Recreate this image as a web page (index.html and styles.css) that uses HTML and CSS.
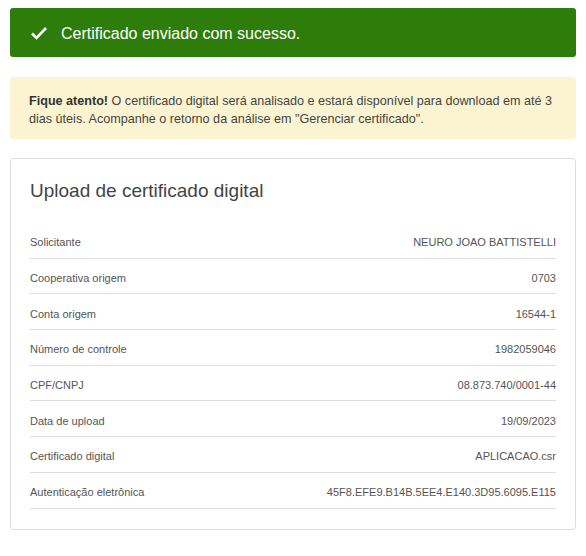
FILE: index.html
```html
<!DOCTYPE html>
<html lang="pt-BR">
<head>
    <meta charset="UTF-8">
    <meta name="viewport" content="width=device-width, initial-scale=1.0">
    <title>Upload de certificado digital</title>
    <link rel="stylesheet" href="styles.css">
</head>

<body>
    <div class="success">
        <svg class="check" width="18" height="14" viewBox="0 0 18 14">
            <path d="M2 7.5 L6.5 12 L16 2" fill="none" stroke="#fff" stroke-width="2.6"/>
        </svg>
        <span>Certificado enviado com sucesso.</span>
    </div>

    <div class="warning">
        <b>Fique atento!</b> O certificado digital será analisado e estará disponível para download em até 3 dias úteis. Acompanhe o retorno da análise em "Gerenciar certificado".
    </div>

    <div class="card">
        <h2>Upload de certificado digital</h2>
        <ul class="info" id="info-list"></ul>
    </div>

    <script>
        const rows = [
            ["Solicitante", "NEURO JOAO BATTISTELLI"],
            ["Cooperativa origem", "0703"],
            ["Conta origem", "16544-1"],
            ["Número de controle", "1982059046"],
            ["CPF/CNPJ", "08.873.740/0001-44"],
            ["Data de upload", "19/09/2023"],
            ["Certificado digital", "APLICACAO.csr"],
            ["Autenticação eletrônica", "45F8.EFE9.B14B.5EE4.E140.3D95.6095.E115"]
        ];

        const list = document.getElementById("info-list");

        rows.forEach(([label, value]) => {
            const li = document.createElement("li");
            li.innerHTML = `<span>${label}</span><span>${value}</span>`;
            list.appendChild(li);
        });
    </script>
</body>
</html>
```

FILE: styles.css
```css
body {
    margin: 8px 10px;
    font-family: "Liberation Sans", Arial, sans-serif;
    color: #555;
    background: white;
}
.success {
    display: flex;
    align-items: center;
    height: 49px;
    padding: 0 20px;
    box-sizing: border-box;
    background-color: #2e7d0b;
    color: white;
    font-size: 16px;
    border-radius: 3px;
}
.success span {
    padding-top: 3px;
}
.check {
    margin-right: 13px;
}
.warning {
    margin-top: 20px;
    padding: 15px 19px 11px;
    background-color: #fcf4d1;
    color: #444;
    font-size: 12.6px;
    line-height: 18px;
    border-radius: 3px;
}
.warning b {
    color: #333;
}
.card {
    margin-top: 19px;
    padding: 20px 19px 20px;
    border: 1px solid #ddd;
    border-radius: 4px;
}
.card h2 {
    margin: 0 0 20px;
    font-size: 19px;
    font-weight: normal;
    line-height: 24px;
    color: #444;
}
.info {
    list-style: none;
    margin: 0;
    padding: 0;
}
.info li {
    display: flex;
    justify-content: space-between;
    align-items: center;
    height: 35.7px;
    padding-top: 4px;
    box-sizing: border-box;
    border-bottom: 1px solid #ddd;
    font-size: 11px;
    color: #555;
}
```
